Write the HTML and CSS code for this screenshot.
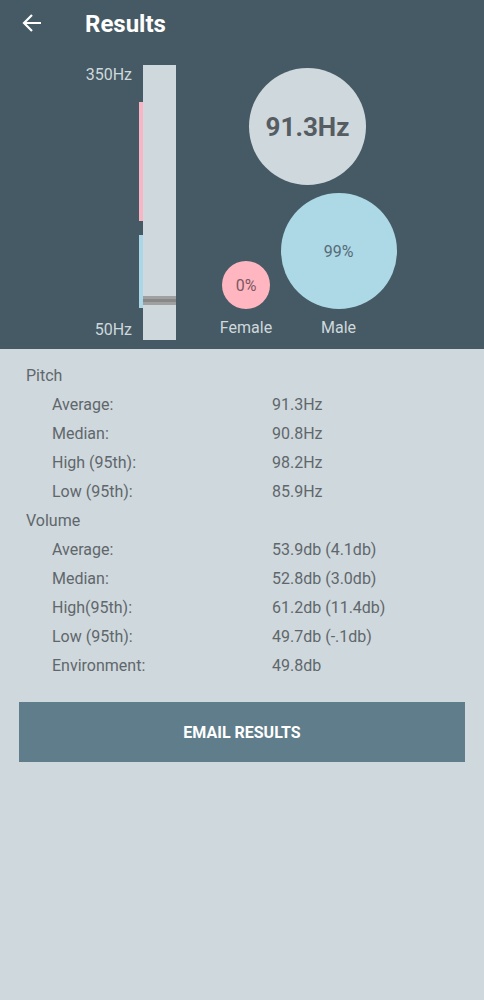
FILE: index.html
```html
<!DOCTYPE html>
<html lang="en">
<head>
  <meta charset="UTF-8" />
  <meta name="viewport" content="width=device-width, initial-scale=1.0"/>
  <title>Results</title>
  <link rel="stylesheet" href="styles.css">
</head>
<body>

<!-- Top panel -->
<div class="top">
  <div class="toolbar">
    <svg class="back" width="20" height="20" viewBox="0 0 20 20">
      <path d="M19 10H2M10 2L2 10l8 8" fill="none" stroke="#fff" stroke-width="2.2"/>
    </svg>
    <h1>Results</h1>
  </div>

  <div class="chart">
    <div class="scale">
      <span>350Hz</span>
      <span>50Hz</span>
    </div>
    <div class="ranges">
      <div class="range-female"></div>
      <div class="range-male"></div>
    </div>
    <div class="bar">
      <div class="marker"></div>
    </div>

    <div class="bubbles">
      <div class="pitch-circle">91.3Hz</div>
      <div class="gender-row">
        <div class="gender female">
          <div class="circle">0%</div>
          <span>Female</span>
        </div>
        <div class="gender male">
          <div class="circle">99%</div>
          <span>Male</span>
        </div>
      </div>
    </div>
  </div>
</div>

<!-- Stats -->
<div class="stats">
  <div class="group">Pitch</div>
  <div class="row"><span>Average:</span><span>91.3Hz</span></div>
  <div class="row"><span>Median:</span><span>90.8Hz</span></div>
  <div class="row"><span>High (95th):</span><span>98.2Hz</span></div>
  <div class="row"><span>Low (95th):</span><span>85.9Hz</span></div>

  <div class="group">Volume</div>
  <div class="row"><span>Average:</span><span>53.9db (4.1db)</span></div>
  <div class="row"><span>Median:</span><span>52.8db (3.0db)</span></div>
  <div class="row"><span>High(95th):</span><span>61.2db (11.4db)</span></div>
  <div class="row"><span>Low (95th):</span><span>49.7db (-.1db)</span></div>
  <div class="row"><span>Environment:</span><span>49.8db</span></div>

  <button class="email-btn">EMAIL RESULTS</button>
</div>

</body>
</html>
```

FILE: styles.css
```css
body {
  font-family: Roboto, 'Noto Sans', sans-serif;
  background: #cfd8dc;
  margin: 0;
  padding: 0;
}

.top {
  background: #455a64;
  height: 349px;
}

.toolbar {
  height: 48px;
  display: flex;
  align-items: center;
  padding-left: 22px;
}

.toolbar .back {
  margin-top: -3px;
}

.toolbar h1 {
  margin: 0 0 0 43px;
  color: white;
  font-size: 24px;
  font-weight: 700;
}

.chart {
  display: flex;
  padding-top: 17px;
}

.scale {
  width: 132px;
  height: 275px;
  display: flex;
  flex-direction: column;
  justify-content: space-between;
  align-items: flex-end;
  color: #cfd8dc;
  font-size: 16px;
  line-height: 20px;
}

.ranges {
  width: 4px;
  margin-left: 7px;
}

.range-female {
  margin-top: 37px;
  height: 119px;
  background: #f8b6c4;
}

.range-male {
  margin-top: 14px;
  height: 73px;
  background: #a9d7e6;
}

.bar {
  width: 33px;
  height: 275px;
  background: #cfd8dc;
}

.marker {
  margin-top: 231px;
  height: 3px;
  border-top: 3px solid #a0a0a0;
  border-bottom: 3px solid #a0a0a0;
  background: #888;
}

.bubbles {
  margin-left: 40px;
  padding-top: 3px;
}

.pitch-circle {
  width: 117px;
  height: 117px;
  margin-left: 33px;
  border-radius: 50%;
  background: #cfd8dc;
  color: #555c62;
  font-size: 26px;
  font-weight: 700;
  display: flex;
  align-items: center;
  justify-content: center;
}

.gender-row {
  display: flex;
  align-items: flex-end;
  gap: 4px;
  margin-top: 8px;
}

.gender {
  display: flex;
  flex-direction: column;
  align-items: center;
}

.gender span {
  margin-top: 9px;
  color: #cfd8dc;
  font-size: 16px;
  line-height: 20px;
}

.gender .circle {
  border-radius: 50%;
  display: flex;
  align-items: center;
  justify-content: center;
  font-size: 16px;
}

.female { width: 60px; }
.female .circle {
  width: 48px;
  height: 48px;
  background: #ffb6c1;
  color: #7b5860;
}

.male { width: 117px; }
.male .circle {
  width: 116px;
  height: 116px;
  background: #add8e6;
  color: #566c76;
}

.stats {
  padding-top: 12px;
  color: #5f676c;
  font-size: 16px;
  line-height: 29px;
}

.group {
  padding-left: 26px;
}

.row {
  display: grid;
  grid-template-columns: 220px 1fr;
  padding-left: 52px;
}

.email-btn {
  display: block;
  width: 446px;
  height: 60px;
  margin: 22px 19px 0;
  border: none;
  background: #607d8b;
  color: white;
  font-family: Roboto, sans-serif;
  font-size: 16px;
  font-weight: 700;
}
```
